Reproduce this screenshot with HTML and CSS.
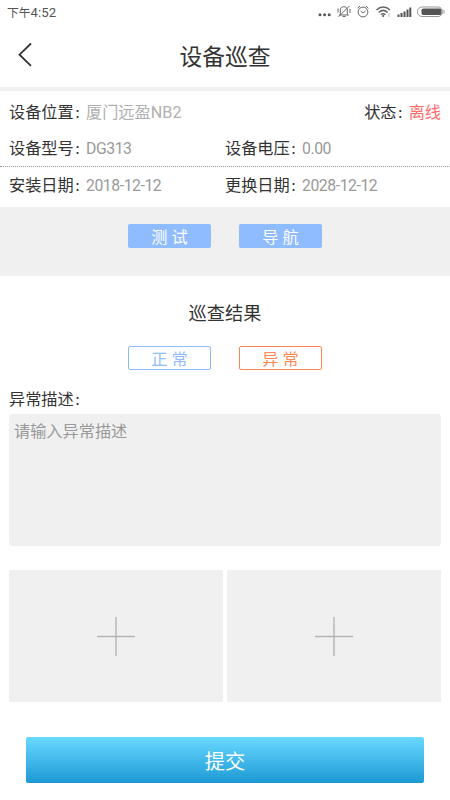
FILE: index.html
```html
<!DOCTYPE html>
<html lang="zh-CN">
<head>
<meta charset="utf-8">
<meta name="viewport" content="width=device-width, initial-scale=1">
<title>设备巡查</title>
<link rel="stylesheet" href="styles.css">
</head>
<body>
<div class="status-bar">
  <div class="clock">下午<span class="digits">4:52</span></div>
  <svg class="status-icons" width="132" height="24" viewBox="318 0 132 24" fill="none" stroke="#666">
    <g fill="#555" stroke="none"><circle cx="320" cy="14.8" r="1.5"/><circle cx="324.6" cy="14.8" r="1.5"/><circle cx="329.2" cy="14.8" r="1.5"/></g>
    <path d="M340.3 14.7V10c0-2 1.3-3.3 3.5-3.3S347.3 8 347.3 10v4.7M338.8 15h10M342.5 16.5h3M338.5 16.8l11-11M338 8.5v4M350 9v4"/>
    <circle cx="363" cy="12" r="4.9"/><path d="M360.6 11l2.4 2 2.6-2M357.5 8.3l2.5-2.3M368.5 8.3L366 6"/>
    <path d="M376.5 10c4-4 9.5-4 13.5 0M378.8 12.5c2.7-2.6 6.2-2.6 8.9 0M381 14.7c1.4-1.2 3-1.2 4.4 0" stroke-width="1.5"/><circle cx="383.2" cy="16" r="1" fill="#555" stroke="none"/><path d="M389 13v4" stroke="#bbb"/>
    <path d="M398.5 17v-2.5M401.5 17v-4M404.5 17v-5.5M407.5 17V9.5M410.3 17V7.5" stroke="#555" stroke-width="2"/>
    <rect x="417.5" y="7" width="25" height="9.5" rx="4.5" stroke="#999"/><rect x="421.5" y="8.5" width="20" height="6.5" rx="1.8" fill="#555" stroke="none"/><path d="M444 10v3.5" stroke="#999"/>
  </svg>
</div>
<header class="header">
  <svg class="back" width="16" height="26" viewBox="0 0 16 26" fill="none" stroke="#333" stroke-width="1.8"><path d="M14 1.5L2.5 12.7l11.5 11.2"/></svg>
  <h1 class="title">设备巡查</h1>
</header>
<section class="info">
  <div class="row row-place">
    <div class="field"><span class="label">设备位置<span class="colon">：</span></span><span class="value light">厦门远盈NB2</span></div>
    <div class="field"><span class="label label-short">状态<span class="colon">：</span></span><span class="offline">离线</span></div>
  </div>
  <div class="row row-model">
    <div class="field"><span class="label">设备型号<span class="colon">：</span></span><span class="value">DG313</span></div>
    <div class="field"><span class="label">设备电压<span class="colon">：</span></span><span class="value">0.00</span></div>
  </div>
  <div class="row row-date">
    <div class="field"><span class="label">安装日期<span class="colon">：</span></span><span class="value">2018-12-12</span></div>
    <div class="field"><span class="label">更换日期<span class="colon">：</span></span><span class="value">2028-12-12</span></div>
  </div>
</section>
<div class="actions">
  <button class="btn solid">测 试</button>
  <button class="btn solid">导 航</button>
</div>
<h2 class="subtitle">巡查结果</h2>
<div class="results">
  <button class="btn normal">正 常</button>
  <button class="btn abnormal">异 常</button>
</div>
<div class="desc-label">异常描述<span class="colon">：</span></div>
<textarea class="desc" placeholder="请输入异常描述"></textarea>
<div class="photos">
  <div class="photo"><svg width="38" height="39" viewBox="0 0 38 39" stroke="#b3b3b3" stroke-width="1.4"><path d="M0 19.5h38M19 0v39"/></svg></div>
  <div class="photo"><svg width="38" height="39" viewBox="0 0 38 39" stroke="#b3b3b3" stroke-width="1.4"><path d="M0 19.5h38M19 0v39"/></svg></div>
</div>
<button class="submit">提交</button>
</body>
</html>
```
FILE: styles.css
```css
* { box-sizing: border-box; }
body {
  margin: 0;
  height: 800px;
  overflow: hidden;
  background: #fff;
  color: #333;
  font: 16.2px/24px Roboto, "Noto Sans CJK SC", sans-serif;
}
button, textarea { font: inherit; border: 0; padding: 0; }
.status-bar {
  display: flex;
  justify-content: space-between;
  height: 24px;
  padding-left: 7px;
  color: #555;
}
.clock { font-size: 11.8px; line-height: 25px; }
.digits { font-size: 13.2px; }
.header {
  display: grid;
  grid-template-columns: 50px 1fr 50px;
  align-items: center;
  height: 67px;
  border-bottom: 4px solid #f0f0f0;
}
.back { margin: 0 0 1px 17px; }
.title {
  margin: 0;
  padding-top: 4px;
  text-align: center;
  font-size: 22.8px;
  font-weight: 400;
  line-height: 34px;
}
.info { height: 116px; }
.row {
  display: grid;
  grid-template-columns: 216px 1fr;
  align-items: center;
  padding: 1px 9px 0;
}
.row-place {
  height: 41px;
  padding-top: 4px;
  grid-template-columns: 1fr auto;
}
.row-model { height: 35px; border-bottom: 1px dotted #999; }
.row-date { height: 38px; }
.field { display: flex; white-space: nowrap; }
.label { width: 77px; }
.label-short { width: 44.5px; }
.colon { margin-left: 1px; font-size: 11px; font-weight: 700; }
.value { color: #999; font-size: 15.8px; letter-spacing: -0.45px; }
.light { color: #b0b0b0; font-size: 16.2px; letter-spacing: 0; }
.offline { color: #ff6b6b; }
.actions {
  display: flex;
  justify-content: center;
  gap: 28px;
  height: 69px;
  padding-top: 17px;
  background: #f0f0f0;
}
.btn {
  width: 83px;
  height: 24px;
  padding-top: 2px;
  border-radius: 2px;
  line-height: 24px;
  text-align: center;
}
.solid { background: #8fbcff; color: #fff; }
.subtitle {
  margin: 0;
  padding: 24px 0 18px;
  text-align: center;
  font-size: 18.2px;
  font-weight: 400;
  line-height: 28px;
}
.results { display: flex; justify-content: center; gap: 28px; }
.normal, .abnormal { line-height: 22px; background: #fff; }
.normal { border: 1px solid #8fbcff; color: #8fbcff; }
.abnormal { border: 1px solid #ff8850; color: #ff8850; }
.desc-label { margin: 18px 9px 2px; height: 24px; }
.desc {
  display: block;
  width: 432px;
  height: 132px;
  margin: 0 9px;
  padding: 6px 5px;
  border-radius: 4px;
  background: #f0f0f0;
  resize: none;
}
.desc::placeholder { color: #999; }
.photos {
  display: grid;
  grid-template-columns: 1fr 1fr;
  gap: 4px;
  height: 132px;
  margin: 24px 9px 35px;
}
.photo {
  display: flex;
  align-items: center;
  justify-content: center;
  background: #f0f0f0;
}
.submit {
  display: block;
  width: 398px;
  height: 46px;
  margin: 0 auto;
  padding-top: 3px;
  border-radius: 2px;
  background: linear-gradient(#69d9ff, #1c99d5);
  color: #fff;
  font-size: 20.3px;
}
```
